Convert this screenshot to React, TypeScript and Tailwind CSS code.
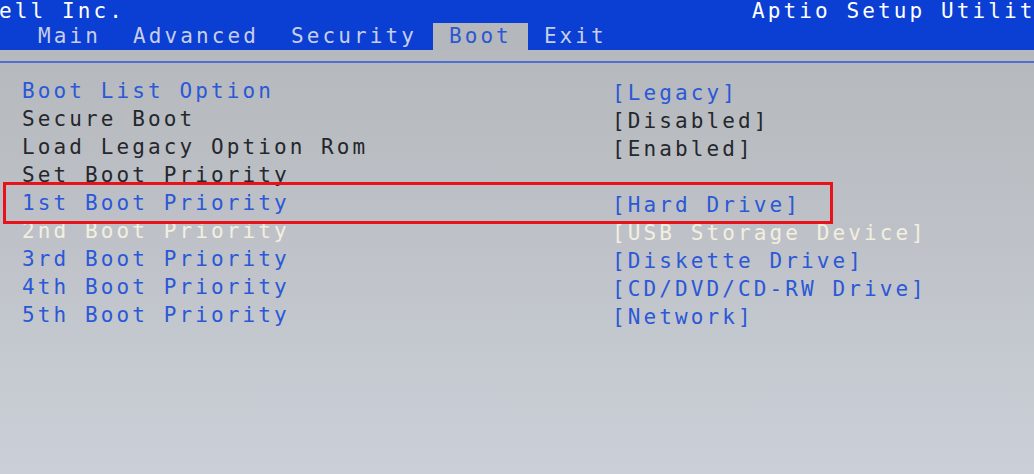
const tabs = ["Main", "Advanced", "Security", "Boot", "Exit"];

type Row = { label: string; value: string; tone: "blue" | "dark" | "light" };

const rows: Row[] = [
  { label: "Boot List Option", value: "[Legacy]", tone: "blue" },
  { label: "Secure Boot", value: "[Disabled]", tone: "dark" },
  { label: "Load Legacy Option Rom", value: "[Enabled]", tone: "dark" },
  { label: "Set Boot Priority", value: "", tone: "dark" },
  { label: "1st Boot Priority", value: "[Hard Drive]", tone: "blue" },
  { label: "2nd Boot Priority", value: "[USB Storage Device]", tone: "light" },
  { label: "3rd Boot Priority", value: "[Diskette Drive]", tone: "blue" },
  { label: "4th Boot Priority", value: "[CD/DVD/CD-RW Drive]", tone: "blue" },
  { label: "5th Boot Priority", value: "[Network]", tone: "blue" },
];

const toneClass = {
  blue: "text-[#2b58d6]",
  dark: "text-[#26272d]",
  light: "text-[#f3efdf]",
};

export default function App() {
  return (
    <div className="relative w-[1034px] h-[474px] overflow-hidden bg-gradient-to-b from-[#b3b7bb] via-[#bec2c8] to-[#cbcfd7] font-['DejaVu_Sans_Mono',monospace] text-[21px] tracking-[3.1px] whitespace-nowrap">
      {/* Header bar */}
      <header className="h-[50px] bg-[#0b3ed2]">
        <div className="flex h-[23px] leading-[23px] text-white overflow-hidden">
          <span className="w-[753px] shrink-0 -ml-[1px]">ell Inc.</span>
          <span>Aptio Setup Utility</span>
        </div>
        <nav className="flex h-[27px] pl-[22px] leading-[27px] text-[#c7cee8]">
          {tabs.map((tab) => (
            <span
              key={tab}
              className={
                tab === "Boot"
                  ? "px-[16px] bg-[#b4b8bc] text-[#2c56d4]"
                  : "px-[16px]"
              }
            >
              {tab}
            </span>
          ))}
        </nav>
      </header>

      <div className="mt-[11px] h-[2px] bg-[#4f6fd4]" />

      {/* Boot options */}
      <div className="mt-[14px] pl-[22px]">
        {rows.map((row) => (
          <div key={row.label} className="grid grid-cols-[590px_1fr] h-[28px]">
            <span className={`leading-[28px] ${toneClass[row.tone]}`}>{row.label}</span>
            <span className={`h-[28px] leading-[32px] ${toneClass[row.tone]}`}>{row.value}</span>
          </div>
        ))}
      </div>

      {/* Highlight annotation */}
      <div className="absolute left-[3px] top-[182px] w-[830px] h-[42px] border-[3px] border-[#e8121a]" />
    </div>
  );
}
